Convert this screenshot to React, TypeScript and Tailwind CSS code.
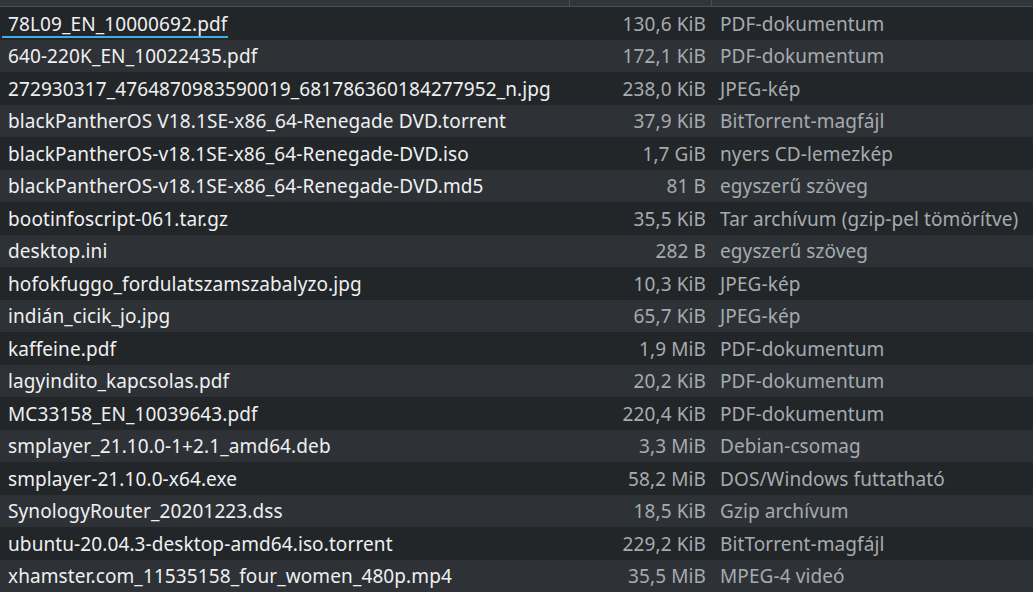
import React from 'react';

type FileRow = { name: string; size: string; type: string };

const files: FileRow[] = [
  { name: '78L09_EN_10000692.pdf', size: '130,6 KiB', type: 'PDF-dokumentum' },
  { name: '640-220K_EN_10022435.pdf', size: '172,1 KiB', type: 'PDF-dokumentum' },
  { name: '272930317_4764870983590019_681786360184277952_n.jpg', size: '238,0 KiB', type: 'JPEG-kép' },
  { name: 'blackPantherOS V18.1SE-x86_64-Renegade DVD.torrent', size: '37,9 KiB', type: 'BitTorrent-magfájl' },
  { name: 'blackPantherOS-v18.1SE-x86_64-Renegade-DVD.iso', size: '1,7 GiB', type: 'nyers CD-lemezkép' },
  { name: 'blackPantherOS-v18.1SE-x86_64-Renegade-DVD.md5', size: '81 B', type: 'egyszerű szöveg' },
  { name: 'bootinfoscript-061.tar.gz', size: '35,5 KiB', type: 'Tar archívum (gzip-pel tömörítve)' },
  { name: 'desktop.ini', size: '282 B', type: 'egyszerű szöveg' },
  { name: 'hofokfuggo_fordulatszamszabalyzo.jpg', size: '10,3 KiB', type: 'JPEG-kép' },
  { name: 'indián_cicik_jo.jpg', size: '65,7 KiB', type: 'JPEG-kép' },
  { name: 'kaffeine.pdf', size: '1,9 MiB', type: 'PDF-dokumentum' },
  { name: 'lagyindito_kapcsolas.pdf', size: '20,2 KiB', type: 'PDF-dokumentum' },
  { name: 'MC33158_EN_10039643.pdf', size: '220,4 KiB', type: 'PDF-dokumentum' },
  { name: 'smplayer_21.10.0-1+2.1_amd64.deb', size: '3,3 MiB', type: 'Debian-csomag' },
  { name: 'smplayer-21.10.0-x64.exe', size: '58,2 MiB', type: 'DOS/Windows futtatható' },
  { name: 'SynologyRouter_20201223.dss', size: '18,5 KiB', type: 'Gzip archívum' },
  { name: 'ubuntu-20.04.3-desktop-amd64.iso.torrent', size: '229,2 KiB', type: 'BitTorrent-magfájl' },
  { name: 'xhamster.com_11535158_four_women_480p.mp4', size: '35,5 MiB', type: 'MPEG-4 videó' },
];

export default function App() {
  return (
    <div
      className="h-[592px] w-[1033px] overflow-hidden bg-[#232629] text-[19px] leading-none tracking-[0.1px]"
      style={{ fontFamily: '"Noto Sans", "DejaVu Sans", sans-serif' }}
    >
      {/* header remnant */}
      <div className="flex h-[7px] border-b border-[#4a5057] bg-[#31363b]">
        <div className="w-[570px] border-r border-[#4a5057]" />
        <div className="w-[142px] border-r border-[#4a5057]" />
        <div className="flex-1" />
      </div>

      {files.map((f, i) => (
        <div
          key={f.name}
          className={`flex h-[32.5px] items-center pt-[2px] ${i % 2 === 0 ? 'bg-[#232629]' : 'bg-[#2e3236]'}`}
        >
          <div className="relative w-[570px] shrink-0 pl-[8px] text-[#eff0f1] whitespace-nowrap">
            <span className="relative">
              {f.name}
              {i === 0 && (
                <span className="absolute left-[-6px] right-[-1px] bottom-[-1px] h-[2px] bg-[#3daee9]" />
              )}
            </span>
          </div>
          <div className="w-[142px] shrink-0 pr-[6px] text-right text-[#a6abb0] whitespace-nowrap">
            {f.size}
          </div>
          <div className="flex-1 pl-[8px] text-[#a6abb0] whitespace-nowrap">{f.type}</div>
        </div>
      ))}
    </div>
  );
}
